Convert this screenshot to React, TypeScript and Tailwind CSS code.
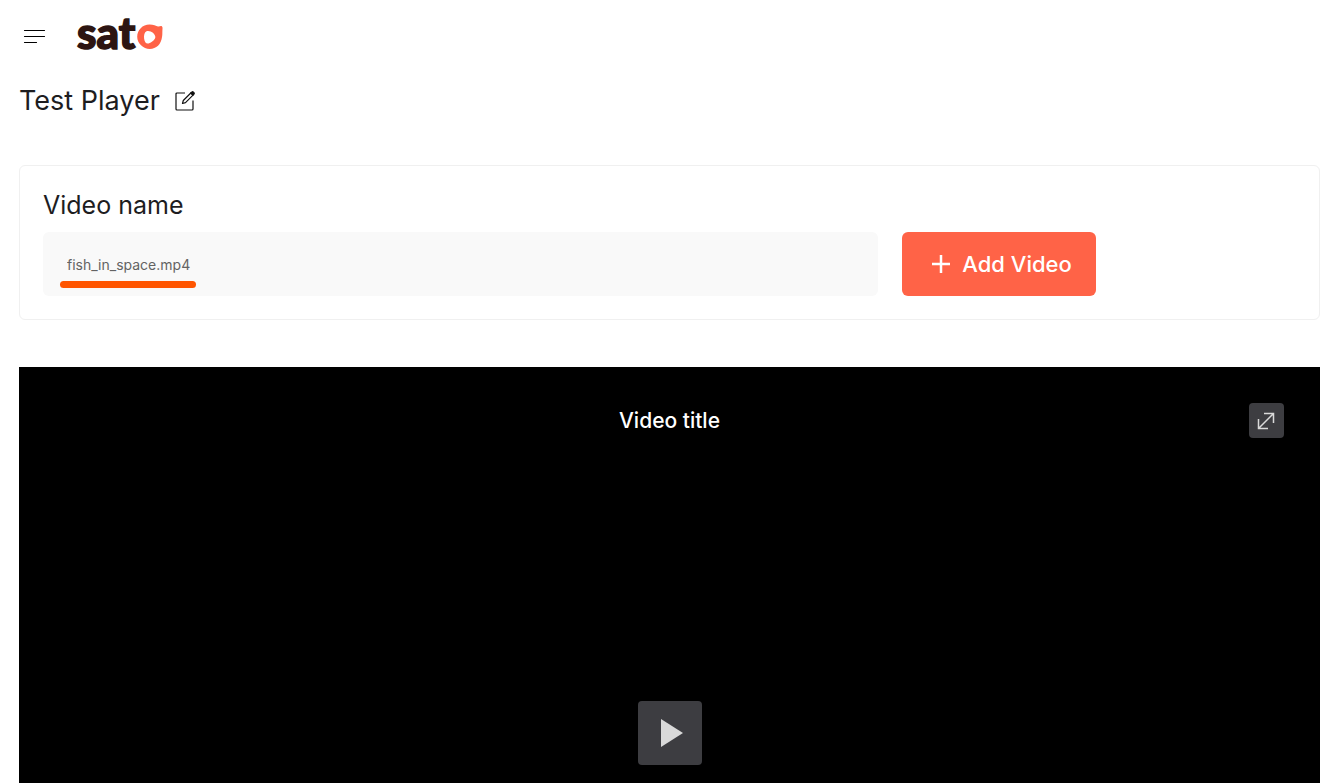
function Logo() {
  return (
    <svg width="88" height="56" viewBox="0 0 88 56" role="img" aria-label="sato">
      <text x="1" y="45" fill="#2d1512" stroke="#2d1512" strokeWidth="1.500" fontSize="44" fontWeight="900" fontFamily="Lato, sans-serif">sat</text>
      <path
        transform="translate(0 10)"
        fill="#ff6347"
        fillRule="evenodd"
        d="M73.500 10.500c4 0 6.500 1.500 8.500 2 1.500.3 3-1 4 0 .9 1 .4 2.600.4 4.100-.1 2 .1 3.900-.3 6C85.200 30.500 80.300 35 73.800 35S61.200 29.500 61.200 22.800 66.500 10.500 73.500 10.500Zm-3 6.700c-2 .8-2.800 4-2.400 7.300.4 3.500 2 5.500 4.500 4.900 3-.8 6.200-3.500 6.700-5.900.3-2.200-2-4.700-4.600-5.900-1.600-.8-3-.8-4.200-.4Z"
      />
    </svg>
  );
}

function MenuIcon() {
  return (
    <svg width="24" height="24" viewBox="0 0 24 24" fill="none" stroke="#000" strokeWidth="1.200" strokeLinecap="round" aria-hidden="true">
      <path d="M2.500 6.500h20M2.500 12.500h20M2.500 18.500h12" />
    </svg>
  );
}

function EditIcon() {
  return (
    <svg width="20" height="20" viewBox="0 0 20 20" fill="none" stroke="#111" strokeWidth="1.200" strokeLinejoin="round" aria-hidden="true">
      <path d="M10 2H2Q1 2 1 3v15q0 1 1 1h15q1 0 1-1v-8.500" />
      <path d="m7.500 12.500.8-3L15.800 2l2.200 2.200-7.500 7.500Z" />
      <path d="m15.800 2 1.200-1.100q.7-.5 1.400.2l.5.500q.7.700.1 1.400L18 4.200Z" fill="#111" />
    </svg>
  );
}

function PlusIcon() {
  return (
    <svg width="18" height="18" viewBox="0 0 18 18" stroke="#fff" strokeWidth="2.500" aria-hidden="true">
      <path d="M9 0v18M0 9h18" />
    </svg>
  );
}

function ExpandIcon() {
  return (
    <svg width="18" height="18" viewBox="0 0 18 18" fill="none" stroke="#d9d9d9" strokeWidth="1.500" aria-hidden="true">
      <path d="M7 1.500h9.500V11M1.500 7v9.500H11M16.500 1.500l-15 15" />
    </svg>
  );
}

function PlayIcon() {
  return (
    <svg width="22" height="28" viewBox="0 0 22 28" fill="#d9d9d9" aria-hidden="true">
      <path d="M0 0l22 14L0 28Z" />
    </svg>
  );
}

export default function App() {
  return (
    <div className="h-screen overflow-hidden bg-white font-[Inter,sans-serif] text-[#1d1d1f]">
      <header className="flex items-center gap-[30px] pt-1 pr-5 pl-[22px]">
        <button type="button" aria-label="Open menu" className="mt-2">
          <MenuIcon />
        </button>
        <a href="#home" className="block">
          <Logo />
        </a>
      </header>

      <main className="pt-[25px] pr-5 pl-[19px]">
        <div className="flex items-center gap-[15px]">
          <h1 className="text-[27px] leading-8">Test Player</h1>
          <button type="button" aria-label="Rename player">
            <EditIcon />
          </button>
        </div>

        <form className="mt-12 rounded-md border border-[#f0f0f0] px-[23px] py-[23px]">
          <label htmlFor="video-name" className="block text-[25px] leading-8">Video name</label>
          <div className="mt-[11px] flex gap-6">
            <div className="relative w-2/3">
              <input
                id="video-name"
                type="text"
                defaultValue="fish_in_space.mp4"
                className="h-16 w-full rounded-md bg-[#f9f9f9] px-6 text-[14px] text-[#636363] outline-none"
              />
              <span className="absolute bottom-2 left-[17px] h-[7px] w-[136px] rounded-full bg-[#ff5500]" />
            </div>
            <button type="button" className="flex h-16 items-center gap-3 rounded-md bg-[#ff6347] pr-6 pl-[30px] text-[22px] font-medium text-white">
              <PlusIcon />
              Add Video
            </button>
          </div>
        </form>

        <section aria-label="Video player" className="mt-[47px] bg-black px-9 pt-9 pb-20 text-white">
          <div className="grid grid-cols-3 items-center">
            <h2 className="col-start-2 text-center text-[21px] leading-8 font-medium">Video title</h2>
            <button type="button" aria-label="Full screen" className="flex size-[35px] items-center justify-center justify-self-end rounded bg-[#3d3d41]">
              <ExpandIcon />
            </button>
          </div>
          <button type="button" aria-label="Play" className="mx-auto mt-[263px] flex size-16 items-center justify-center rounded bg-[#3d3d41] pl-1">
            <PlayIcon />
          </button>
        </section>
      </main>
    </div>
  );
}
